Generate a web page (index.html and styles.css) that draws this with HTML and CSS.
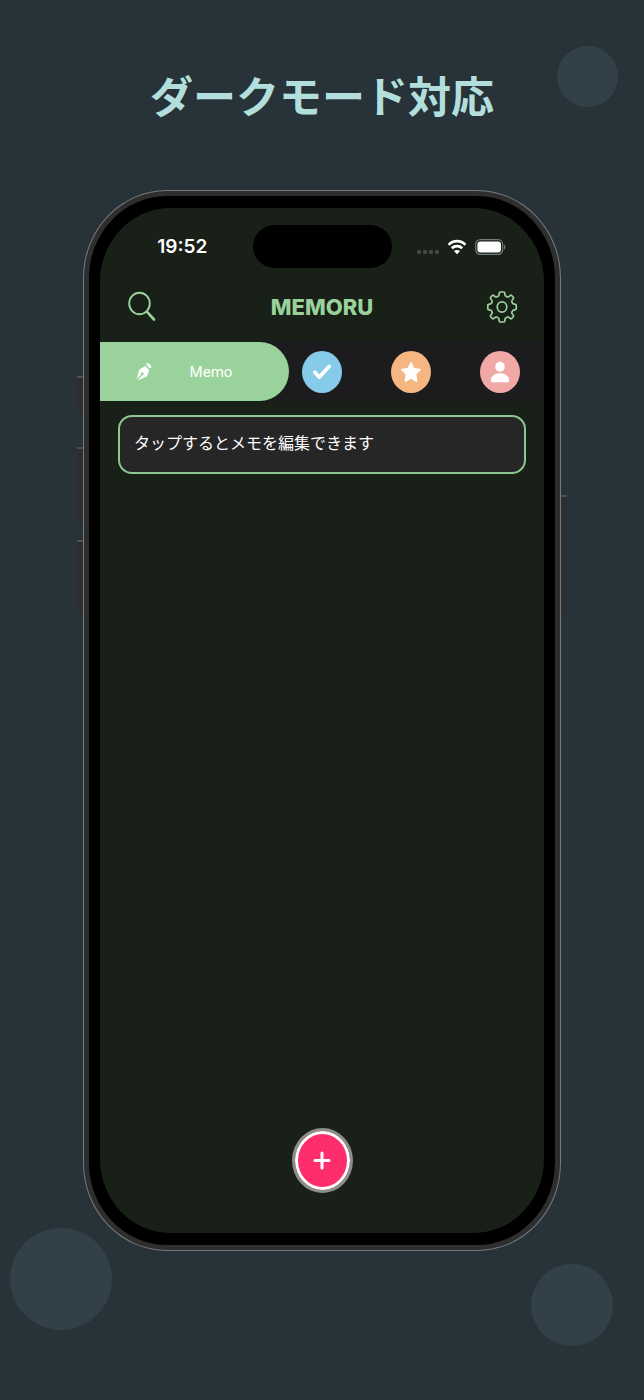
FILE: index.html
```html
<!DOCTYPE html>
<html lang="ja">
<head>
<meta charset="utf-8">
<meta name="viewport" content="width=device-width, initial-scale=1">
<title>MEMORU</title>
<link rel="stylesheet" href="styles.css">
</head>
<body>
<div class="poster">
  <span class="bubble bubble-top"></span>
  <span class="bubble bubble-left"></span>
  <span class="bubble bubble-right"></span>
  <h1 class="headline">ダークモード対応</h1>
  <div class="phone">
    <span class="key key-action"></span>
    <span class="key key-up"></span>
    <span class="key key-down"></span>
    <span class="key key-power"></span>
    <div class="bezel">
      <div class="screen">
        <div class="status">
          <span class="clock">19:52</span>
          <span class="island"></span>
          <div class="signals">
            <svg width="22" height="4" viewBox="0 0 22 4" fill="#454b45"><rect width="4" height="4" rx="1.5"/><rect x="6" width="4" height="4" rx="1.5"/><rect x="12" width="4" height="4" rx="1.5"/><rect x="18" width="4" height="4" rx="1.5"/></svg>
            <svg width="20" height="16" viewBox="0 0 20 16" fill="none" stroke="#fff" stroke-width="2.7"><path d="M1.600 5.800C6.200.9 13.800.9 18.400 5.800"/><path d="M4.800 9.300C7.600 6.500 12.400 6.500 15.200 9.300"/><path d="M10 15.200 6.900 12.100C8.600 10.500 11.400 10.500 13.100 12.100Z" fill="#fff" stroke="none"/></svg>
            <svg width="31" height="16" viewBox="0 0 31 16"><rect x=".7" y=".7" width="27" height="14.6" rx="4.6" fill="none" stroke="#747a74" stroke-width="1.2"/><rect x="2.4" y="2.4" width="23.6" height="11.2" rx="3" fill="#fff"/><path d="M29 5.500c1.800.5 1.800 4.500 0 5Z" fill="#747a74"/></svg>
          </div>
        </div>
        <header class="bar">
          <button class="icon-button" aria-label="検索">
            <svg width="30" height="32" viewBox="0 0 30 32" fill="none" stroke="#9ad29b" stroke-linecap="round"><ellipse cx="12.500" cy="12.500" rx="10.300" ry="10.800" stroke-width="1.900"/><path d="M20.300 21.200 27 28.500" stroke-width="2.600"/></svg>
          </button>
          <h2 class="brand">MEMORU</h2>
          <button class="icon-button" aria-label="設定">
            <svg width="32" height="34" viewBox="-16 -17 32 34" fill="none" stroke="#9ad29b" stroke-width="1.700" stroke-linejoin="round"><ellipse rx="4.800" ry="5.100"/><path d="M-1.800-15H1.800Q2.600-15 2.700-14.200L3.100-11.800Q3.300-11 4.100-10.700L5.300-10.100Q6-9.800 6.700-10.300L8.400-11.600Q9.100-12.100 9.700-11.500L11.300-9.700Q11.800-9.100 11.300-8.400L10.100-6.600Q9.600-5.900 9.900-5.200L10.500-3.900Q10.700-3.200 11.500-3.100L13.400-2.700Q14.200-2.600 14.200-1.800V1.800Q14.200 2.600 13.400 2.700L11.500 3.100Q10.700 3.200 10.500 3.900L9.900 5.200Q9.600 5.900 10.100 6.600L11.300 8.400Q11.800 9.100 11.300 9.700L9.700 11.500Q9.100 12.100 8.400 11.600L6.700 10.300Q6 9.800 5.300 10.100L4.100 10.700Q3.300 11 3.100 11.800L2.700 14.200Q2.600 15 1.800 15H-1.800Q-2.600 15-2.700 14.200L-3.100 11.800Q-3.300 11-4.100 10.700L-5.300 10.100Q-6 9.800-6.700 10.300L-8.400 11.600Q-9.100 12.100-9.700 11.500L-11.300 9.700Q-11.800 9.100-11.300 8.400L-10.100 6.600Q-9.600 5.900-9.900 5.200L-10.500 3.900Q-10.700 3.200-11.500 3.100L-13.400 2.700Q-14.200 2.600-14.200 1.800V-1.800Q-14.200-2.600-13.400-2.700L-11.500-3.100Q-10.700-3.200-10.500-3.900L-9.900-5.200Q-9.600-5.900-10.100-6.600L-11.300-8.400Q-11.800-9.100-11.300-9.700L-9.700-11.500Q-9.100-12.100-8.400-11.600L-6.700-10.300Q-6-9.800-5.300-10.100L-4.100-10.700Q-3.300-11-3.100-11.800L-2.700-14.200Q-2.600-15-1.800-15Z"/></svg>
          </button>
        </header>
        <nav class="tabs">
          <button class="tab-current">
            <svg width="16" height="18" viewBox="0 0 16 18" fill="#fff"><path d="M10.200 1.300 11.600.2Q12.200-.2 12.800.4L15.200 3Q15.600 3.600 15.100 4.200L13.900 5.500Z"/><path d="M9.300 2.900 13.200 7.100 11.300 12.500Q11 13.400 10.100 13.700L2 17.200 5.800 12.300A1.500 1.500 0 1 0 4.800 11.400L.7 16.300 3 7.500Q3.300 6.500 4.100 6Z"/></svg>
            <span class="tab-label">Memo</span>
          </button>
          <button class="tab" aria-label="チェック"><span class="dot dot-blue"><svg width="20" height="18" viewBox="0 0 20 18" fill="none" stroke="#fff" stroke-width="3.600" stroke-linecap="round" stroke-linejoin="round"><path d="M2.800 9.200 7.300 14.200 17.200 3.300"/></svg></span></button>
          <button class="tab" aria-label="お気に入り"><span class="dot dot-orange"><svg width="22" height="22" viewBox="0 0 22 22" fill="#fff" stroke="#fff" stroke-width="1.600" stroke-linejoin="round"><path d="M11 1.800 13.700 7.700 20.200 8.500 15.500 13.200 16.600 20.200 11 16.900 5.400 20.200 6.500 13.200 1.800 8.500 8.300 7.700Z"/></svg></span></button>
          <button class="tab" aria-label="プロフィール"><span class="dot dot-pink"><svg width="20" height="22" viewBox="0 0 20 22" fill="#fff"><ellipse cx="10" cy="5.700" rx="4.700" ry="5"/><path d="M1 20Q1 12.300 10 12.300T19 20Q19 21.300 17.800 21.300H2.200Q1 21.300 1 20Z"/></svg></span></button>
        </nav>
        <main class="notes">
          <button class="note">タップするとメモを編集できます</button>
        </main>
        <footer class="actions">
          <button class="add" aria-label="追加"><svg width="18" height="19" viewBox="0 0 18 19" fill="none" stroke="#fff" stroke-width="3" stroke-linecap="round"><path d="M9 2V17M2 9.500H16"/></svg></button>
        </footer>
      </div>
    </div>
  </div>
</div>
</body>
</html>
```
FILE: styles.css
```css
* {
  box-sizing: border-box;
}

body {
  margin: 0;
  background: #283239;
  font-family: Inter, "Noto Sans CJK JP", sans-serif;
}

button {
  margin: 0;
  padding: 0;
  border: 0;
  background: none;
  color: inherit;
  font: inherit;
  cursor: pointer;
}

svg {
  display: block;
}

.poster {
  position: relative;
  min-height: 100vh;
  padding: 62px 83px 148px;
  overflow: hidden;
}

.bubble {
  position: absolute;
  border-radius: 50%;
  background: #324147;
}

.bubble-top {
  top: 46px;
  right: 26px;
  width: 61px;
  height: 61px;
}

.bubble-left {
  bottom: 70px;
  left: 10px;
  width: 102px;
  height: 102px;
}

.bubble-right {
  bottom: 54px;
  right: 31px;
  width: 82px;
  height: 82px;
}

.headline {
  margin: 0 0 64px;
  color: #b2dfdb;
  font-family: "Noto Sans CJK JP", sans-serif;
  font-size: 43px;
  font-weight: 700;
  line-height: 64px;
  text-align: center;
  white-space: nowrap;
}

.phone {
  position: relative;
  display: flex;
  aspect-ratio: 478 / 1061;
  padding: 5px;
  border: 1px solid #77797b;
  border-radius: 84px / 88px;
  background: #2e2e2e;
}

.key {
  position: absolute;
  left: -7px;
  width: 6px;
  border-top: 2px solid #4c4e4f;
  background: #2d2e2f;
}

.key-action {
  top: 185px;
  height: 38px;
}

.key-up {
  top: 256px;
  height: 74px;
}

.key-down {
  top: 349px;
  height: 74px;
}

.key-power {
  top: 304px;
  right: -7px;
  left: auto;
  height: 118px;
}

.bezel {
  display: flex;
  flex: 1;
  padding: 12px 11px;
  border-radius: 78px / 82px;
  background: #000;
}

.screen {
  display: flex;
  flex: 1;
  flex-direction: column;
  min-width: 0;
  overflow: hidden;
  border-radius: 70px / 74px;
  background: #182018;
}

.status {
  display: grid;
  grid-template-columns: 1fr 139px 1fr;
  align-items: center;
  padding-top: 17px;
}

.clock {
  padding-left: 12px;
  color: #fff;
  font-size: 19px;
  font-weight: 600;
  line-height: 24px;
  text-align: center;
}

.island {
  height: 43px;
  border-radius: 22px;
  background: #000;
}

.signals {
  display: flex;
  align-items: center;
  justify-content: center;
  gap: 8px;
  padding-right: 12px;
}

.signals svg:first-child {
  margin-top: 10px;
}

.bar {
  display: flex;
  align-items: center;
  justify-content: space-between;
  padding: 21px 26px 17px;
}

.icon-button {
  display: flex;
  align-items: center;
  justify-content: center;
  width: 32px;
  height: 36px;
}

.brand {
  margin: 0;
  color: #9ad29b;
  font-size: 22px;
  font-weight: 800;
  line-height: 28px;
}

.tabs {
  display: grid;
  grid-template-columns: repeat(5, minmax(0, 1fr));
  height: 59px;
  background: #1c1c1e;
}

.tab-current {
  display: grid;
  grid-template-columns: 2fr minmax(0, 1fr) 1fr;
  grid-column: span 2;
  align-items: center;
  justify-items: center;
  margin-right: -11px;
  padding-right: 11px;
  border-radius: 0 30px 30px 0;
  background: #9ad29b;
  color: #fff;
}

.tab-label {
  font-family: Roboto, sans-serif;
  font-size: 15px;
}

.tab {
  display: flex;
  align-items: center;
  justify-content: center;
}

.dot {
  display: flex;
  align-items: center;
  justify-content: center;
  width: 40px;
  height: 42px;
  border-radius: 50%;
}

.dot-blue {
  background: #87cbea;
}

.dot-orange {
  background: #f5b682;
}

.dot-pink {
  background: #f1a9a8;
}

.notes {
  flex: 1;
  padding: 14px 18px;
}

.note {
  display: block;
  width: 100%;
  min-height: 59px;
  padding: 11px 14px 16px;
  border: 2px solid #8fc591;
  border-radius: 14px;
  background: #262627;
  color: #fff;
  font-family: "Noto Sans CJK JP", sans-serif;
  font-size: 16px;
  line-height: 28px;
  text-align: left;
}

.actions {
  display: flex;
  justify-content: center;
  padding-bottom: 40px;
}

.add {
  display: flex;
  align-items: center;
  justify-content: center;
  width: 61px;
  height: 65px;
  border: 3px solid #8b8f8b;
  border-radius: 50%;
  background: #fe2d6b;
  box-shadow: inset 0 0 0 3px #fff;
}
```
